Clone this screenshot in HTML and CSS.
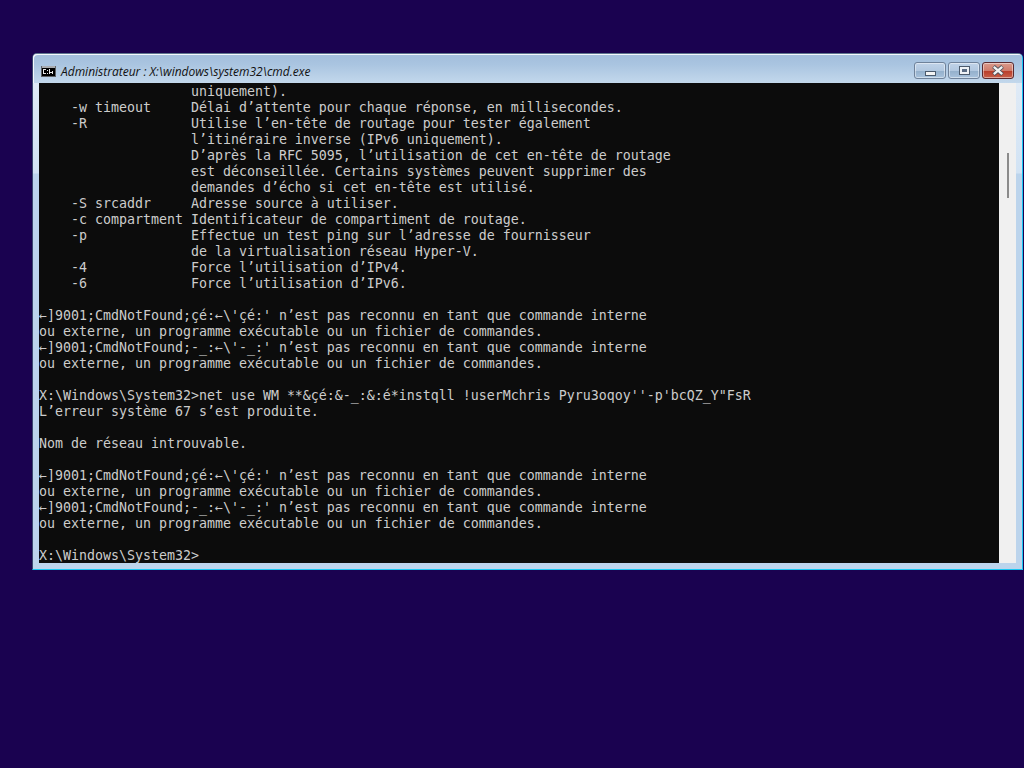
FILE: index.html
```html
<!DOCTYPE html>
<html lang="fr">
<head>
<meta charset="utf-8">
<title>cmd.exe</title>
<link rel="stylesheet" href="styles.css">
</head>
<body>
<main class="window">
  <header class="titlebar">
    <svg class="app-icon" width="15" height="11" viewBox="0 0 15 11" aria-hidden="true">
      <rect x="0" y="0" width="15" height="11" fill="#5f6266"/>
      <rect x="1" y="0" width="13" height="2" fill="#a9acb0"/>
      <rect x="1" y="2" width="13" height="8" fill="#000"/>
      <rect x="2" y="3" width="3" height="5" fill="#e8e8e8"/>
      <rect x="3" y="4" width="2" height="3" fill="#000"/>
      <rect x="6" y="4" width="1" height="1" fill="#e8e8e8"/>
      <rect x="6" y="7" width="1" height="1" fill="#e8e8e8"/>
      <rect x="8" y="3" width="1" height="5" fill="#e8e8e8"/>
      <rect x="9" y="6" width="3" height="1" fill="#e8e8e8"/>
      <rect x="11" y="5" width="1" height="3" fill="#e8e8e8"/>
    </svg>
    <span class="title">Administrateur : X:\windows\system32\cmd.exe</span>
    <div class="controls">
      <div class="btn btn-min"><span class="glyph-min"></span></div>
      <div class="btn btn-max"><span class="glyph-max"></span></div>
      <div class="btn btn-close">
        <svg width="14" height="11" viewBox="0 0 14 11" aria-hidden="true">
          <path d="M2.5 1.5 L11.5 9.5 M11.5 1.5 L2.5 9.5" stroke="#46505c" stroke-width="4" fill="none"/>
          <path d="M2.8 1.8 L11.2 9.2 M11.2 1.8 L2.8 9.2" stroke="#f2f2f2" stroke-width="2.4" fill="none"/>
        </svg>
      </div>
    </div>
  </header>
  <div class="client">
<pre class="console">                   uniquement).
    -w timeout     Délai d’attente pour chaque réponse, en millisecondes.
    -R             Utilise l’en-tête de routage pour tester également
                   l’itinéraire inverse (IPv6 uniquement).
                   D’après la RFC 5095, l’utilisation de cet en-tête de routage
                   est déconseillée. Certains systèmes peuvent supprimer des
                   demandes d’écho si cet en-tête est utilisé.
    -S srcaddr     Adresse source à utiliser.
    -c compartment Identificateur de compartiment de routage.
    -p             Effectue un test ping sur l’adresse de fournisseur
                   de la virtualisation réseau Hyper-V.
    -4             Force l’utilisation d’IPv4.
    -6             Force l’utilisation d’IPv6.

←]9001;CmdNotFound;çé:←\'çé:' n’est pas reconnu en tant que commande interne
ou externe, un programme exécutable ou un fichier de commandes.
←]9001;CmdNotFound;-_:←\'-_:' n’est pas reconnu en tant que commande interne
ou externe, un programme exécutable ou un fichier de commandes.

X:\Windows\System32&gt;net use WM **&amp;çé:&amp;-_:&amp;:é*instqll !userMchris Pyru3oqoy''-p'bcQZ_Y"FsR
L’erreur système 67 s’est produite.

Nom de réseau introuvable.

←]9001;CmdNotFound;çé:←\'çé:' n’est pas reconnu en tant que commande interne
ou externe, un programme exécutable ou un fichier de commandes.
←]9001;CmdNotFound;-_:←\'-_:' n’est pas reconnu en tant que commande interne
ou externe, un programme exécutable ou un fichier de commandes.

X:\Windows\System32&gt;</pre>
    <div class="scrollbar"><div class="thumb"></div></div>
  </div>
</main>
</body>
</html>
```
FILE: styles.css
```css
html, body {
  margin: 0;
  padding: 0;
  width: 1024px;
  height: 768px;
  overflow: hidden;
  background: #1a0250;
}
body {
  padding: 53px 0 0 32px;
  box-sizing: border-box;
}
.window {
  width: 991px;
  height: 517px;
  box-sizing: border-box;
  background: linear-gradient(to bottom, #c3d8ec 0, #dfeaf6 30px, #d2e3f4 119px, #bcd4ec 120px);
  border: 1px solid #5e7590;
  border-left-color: #39466f;
  border-right-color: #19c6f2;
  border-bottom-color: #19c6f2;
  border-radius: 5px 5px 0 0;
  display: flex;
  flex-direction: column;
  padding: 0 6px 6px 6px;
}
.titlebar {
  height: 29px;
  display: flex;
  align-items: center;
  flex: none;
  margin: 0 -6px;
  padding: 5px 8px 0 8px;
  box-sizing: border-box;
  background: linear-gradient(to bottom, #a3bedc 0, #a9c4e0 10px, #c3d8ec 29px);
  border-radius: 4px 4px 0 0;
  box-shadow: inset 1px 1px 0 #f4f8fc;
}
.app-icon {
  flex: none;
  margin-right: 5px;
}
.title {
  font: italic 12px "Open Sans", "Liberation Sans", sans-serif;
  color: #111111;
  white-space: nowrap;
  padding-top: 1px;
}
.controls {
  margin-left: auto;
  display: flex;
  gap: 2px;
  align-self: flex-start;
  margin-top: 3px;
}
.btn {
  width: 32px;
  height: 17px;
  box-sizing: border-box;
  border: 1px solid #6f829a;
  border-radius: 3px;
  display: flex;
  align-items: center;
  justify-content: center;
  box-shadow: inset 0 0 0 1px rgba(255,255,255,.45);
  background: linear-gradient(to bottom, #c0d3e8 0, #b2c8e0 50%, #92aeca 50%, #a8c2dc 100%);
}
.glyph-min {
  width: 11px;
  height: 5px;
  margin-top: 5px;
  box-sizing: border-box;
  background: #f4f4f4;
  border: 1px solid #4b5a6c;
}
.glyph-max {
  width: 9px;
  height: 7px;
  box-sizing: border-box;
  background: #5a6c84;
  border: 2px solid #eef2f6;
  outline: 1px solid #4b5a6c;
}
.btn-close {
  border-color: #5a2a30;
  background: linear-gradient(to bottom, #d99a8c 0, #cf7c6c 50%, #b83a28 50%, #c8604a 100%);
}
.client {
  flex: 1;
  display: flex;
  min-height: 0;
}
.console {
  flex: 1;
  margin: 0;
  padding-top: 1px;
  box-sizing: border-box;
  height: 480px;
  background: #0c0c0c;
  color: #cccccc;
  font-family: "DejaVu Sans Mono", monospace;
  font-size: 13.29px;
  line-height: 16px;
  overflow: hidden;
}
.scrollbar {
  width: 17px;
  height: 480px;
  flex: none;
  background: #f0f0f0;
  position: relative;
}
.thumb {
  position: absolute;
  left: 8px;
  top: 70px;
  width: 2px;
  height: 45px;
  background: #8b8b8b;
}
```
